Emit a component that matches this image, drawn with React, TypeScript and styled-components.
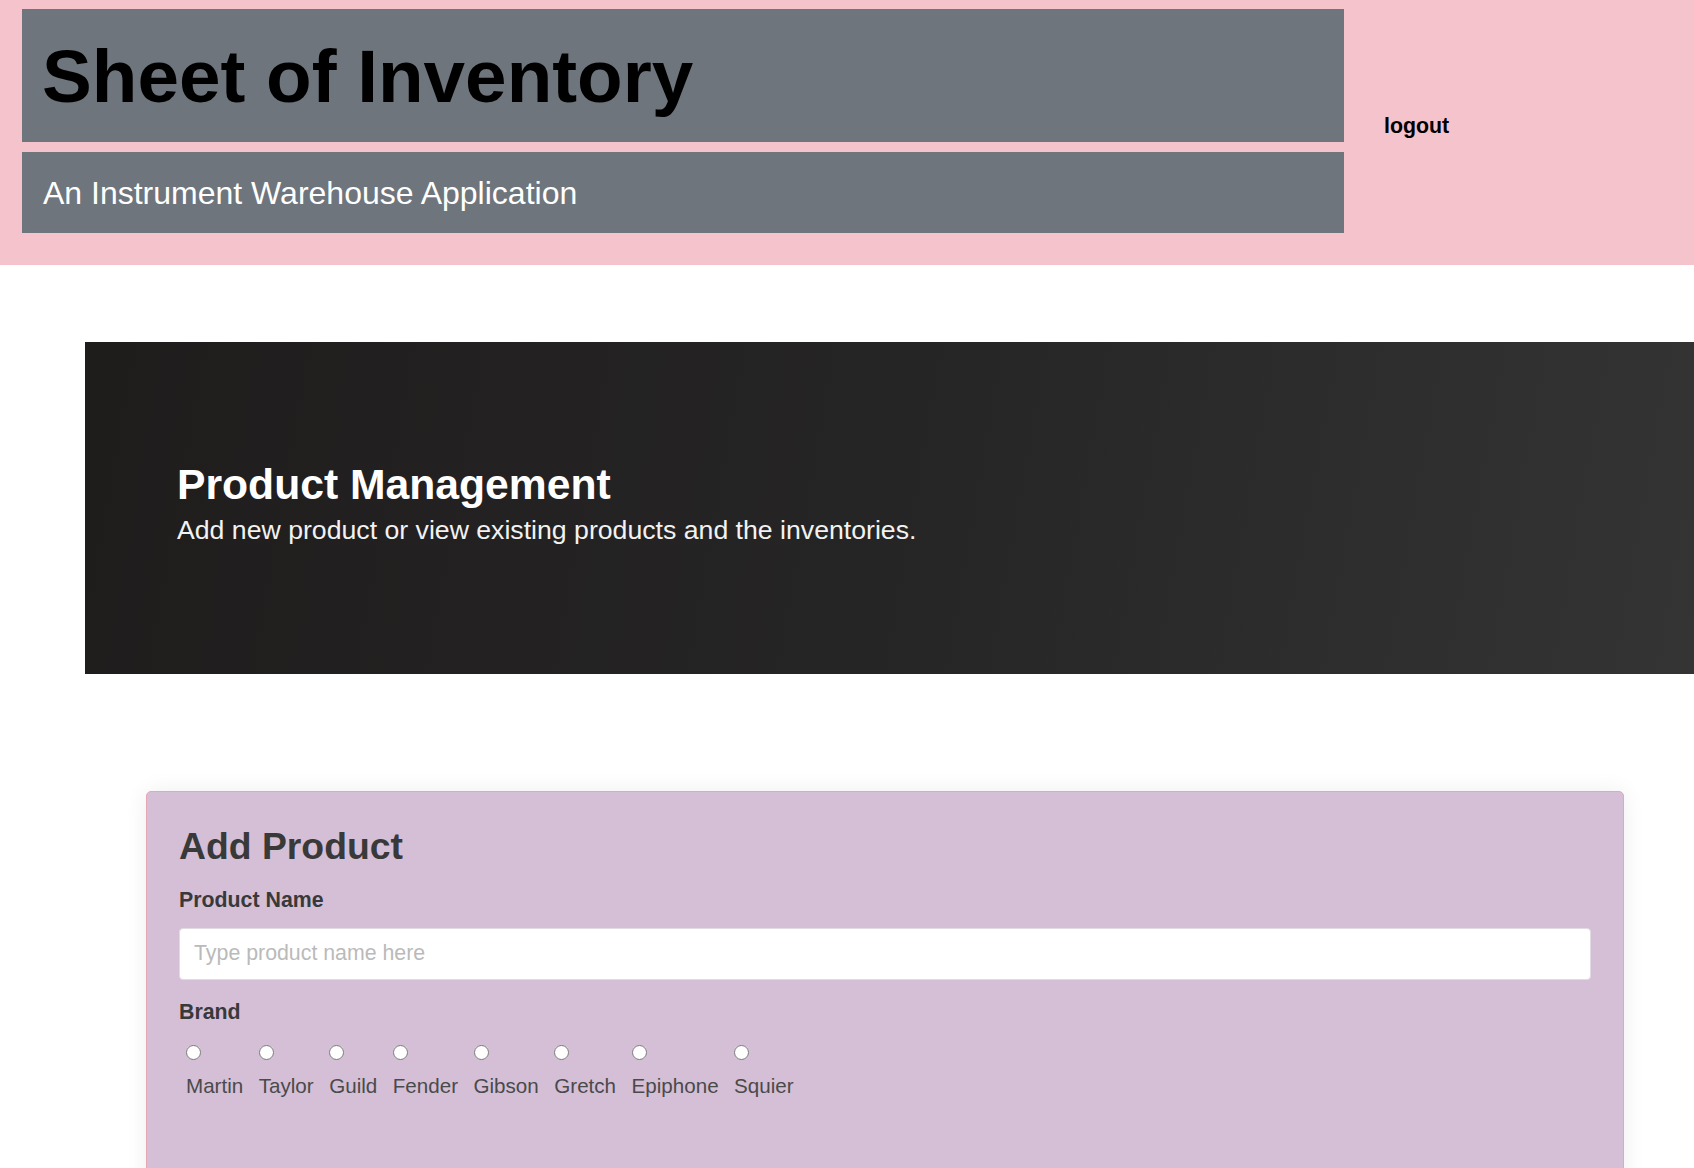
import React from "react";
import styled, { createGlobalStyle } from "styled-components";

const GlobalStyle = createGlobalStyle`
  html, body {
    margin: 0;
    padding: 0;
    background: #ffffff;
    overflow-x: hidden;
  }
  body {
    font-family: "Liberation Sans", Arial, Helvetica, sans-serif;
    color: #000;
  }
  * { box-sizing: border-box; }
`;

const Header = styled.header`
  display: flex;
  align-items: center;
  background: #f5c3cc;
  padding: 9px 0 32px 22px;
`;

const TitleColumn = styled.div`
  flex: 0 0 1322px;
  display: flex;
  flex-direction: column;
  gap: 10px;
`;

const TitleBox = styled.div<{ $pad: string }>`
  background: #6e757c;
  padding: ${(p) => p.$pad};
`;

const MainTitle = styled.h1`
  margin: 0;
  font-size: 74.67px;
  font-weight: 700;
  line-height: normal;
  color: #000;
`;

const SubTitle = styled.p`
  margin: 0;
  font-size: 32px;
  line-height: normal;
  color: #ffffff;
`;

const LogoutLink = styled.a`
  margin-left: 40px;
  margin-top: 11px;
  font-size: 21.33px;
  font-weight: 700;
  color: #000;
  text-decoration: none;
  cursor: pointer;
`;

const Banner = styled.section`
  margin: 77px 0 0 85px;
  padding: 117px 92px 124px;
  background: linear-gradient(100deg, #1f1c1c 0%, #262525 50%, #343434 100%);
  color: #ffffff;
`;

const BannerTitle = styled.h2`
  margin: 0;
  font-size: 42.67px;
  font-weight: 700;
  line-height: 1.2;
`;

const BannerLead = styled.p`
  margin: 0;
  font-size: 26.67px;
  line-height: 1.5;
  color: #f2f2f2;
`;

const Card = styled.section`
  margin: 117px 70px 0 146px;
  padding: 32px 32px 90px;
  background: #d4bfd6;
  border: 1px solid #e3a8b3;
  border-radius: 5px;
  box-shadow: 0 0 22px rgba(0, 0, 0, 0.07);
  color: #393939;
`;

const CardTitle = styled.h3`
  margin: 0 0 15px;
  font-size: 37.33px;
  font-weight: 700;
  line-height: 1.2;
  color: #393939;
`;

const FieldLabel = styled.label`
  display: block;
  font-size: 21.33px;
  font-weight: 700;
  line-height: 32px;
  color: #393939;
`;

const TextInput = styled.input`
  display: block;
  width: 100%;
  height: 52px;
  margin: 12px 0 16px;
  padding: 0 14px;
  font-family: "Liberation Sans", Arial, Helvetica, sans-serif;
  font-size: 21.33px;
  color: #333;
  background: #ffffff;
  border: 1px solid #e2dbe3;
  border-radius: 4px;
  outline: none;

  &::placeholder {
    color: #bababa;
  }
`;

const RadioGroup = styled.div`
  display: flex;
  gap: 15.5px;
  margin-top: 17px;
  padding-left: 7px;
`;

const RadioItem = styled.label`
  display: flex;
  flex-direction: column;
  align-items: flex-start;
  font-size: 20.6px;
  line-height: 32px;
  color: #4a4a4a;
  cursor: pointer;
`;

const Radio = styled.input`
  width: 15px;
  height: 15px;
  margin: 0 0 10px 0;
`;

const brands = ["Martin", "Taylor", "Guild", "Fender", "Gibson", "Gretch", "Epiphone", "Squier"];

export default function App() {
  return (
    <>
      <GlobalStyle />
      <Header>
        <TitleColumn>
          <TitleBox $pad="24px 20px 23px">
            <MainTitle>Sheet of Inventory</MainTitle>
          </TitleBox>
          <TitleBox $pad="23px 21px 21px">
            <SubTitle>An Instrument Warehouse Application</SubTitle>
          </TitleBox>
        </TitleColumn>
        <LogoutLink>logout</LogoutLink>
      </Header>

      <Banner>
        <BannerTitle>Product Management</BannerTitle>
        <BannerLead>Add new product or view existing products and the inventories.</BannerLead>
      </Banner>

      <Card>
        <CardTitle>Add Product</CardTitle>
        <FieldLabel htmlFor="productName">Product Name</FieldLabel>
        <TextInput id="productName" type="text" placeholder="Type product name here" />
        <FieldLabel>Brand</FieldLabel>
        <RadioGroup>
          {brands.map((b) => (
            <RadioItem key={b}>
              <Radio type="radio" name="brand" value={b} />
              {b}
            </RadioItem>
          ))}
        </RadioGroup>
      </Card>
    </>
  );
}
